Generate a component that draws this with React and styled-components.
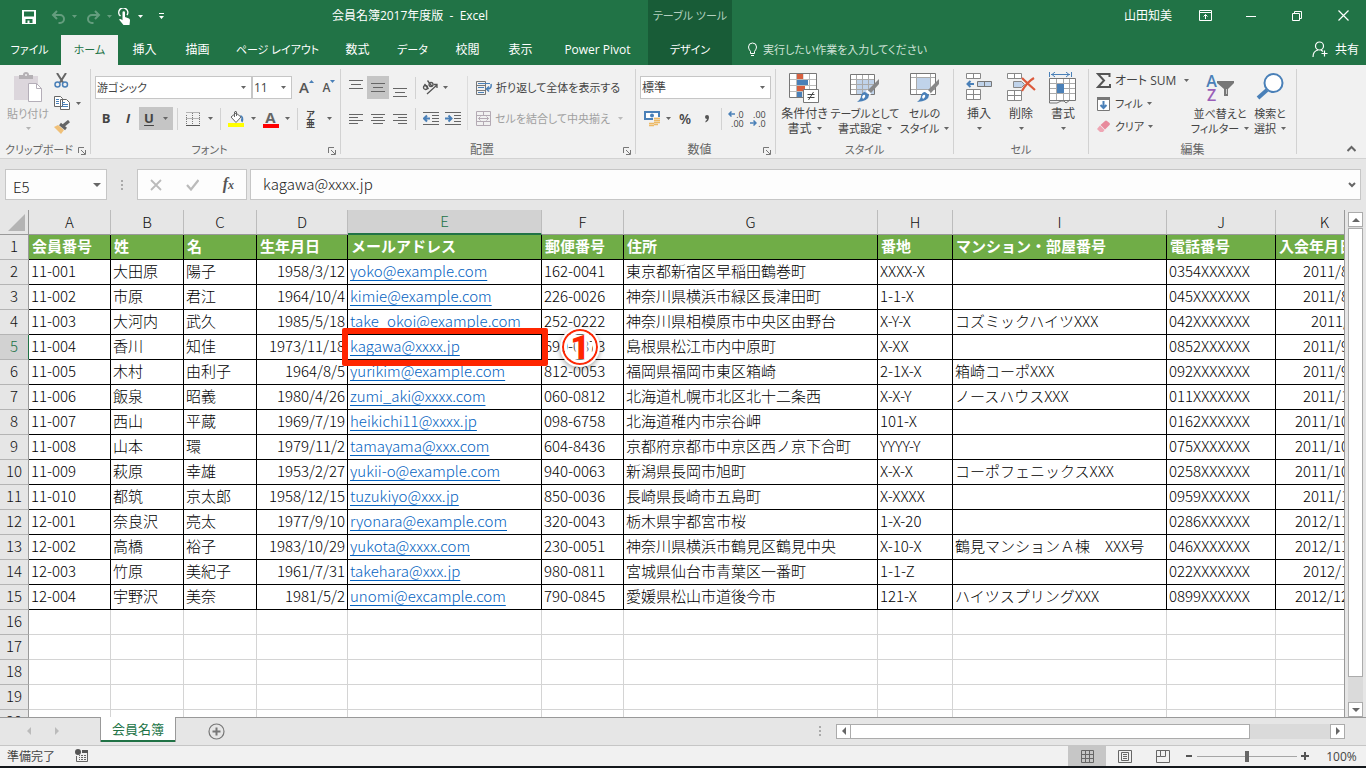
import React from 'react';
import styled, { createGlobalStyle, css } from 'styled-components';

const GlobalStyle = createGlobalStyle`
    * {
        box-sizing: border-box;
    }

    body {
        margin: 0;
        color: #444;
        font-family: 'Open Sans', 'Noto Sans CJK JP', sans-serif;
        font-size: 12px;
        line-height: 15px;
        font-feature-settings: 'palt';
    }

    button,
    input,
    select {
        margin: 0;
        padding: 0;
        border: 0;
        background: none;
        color: inherit;
        font: inherit;
        font-feature-settings: inherit;
        outline: none;
    }

    svg {
        display: block;
        flex: none;
    }
`;

const Window = styled.div`
    display: flex;
    flex-direction: column;
    height: 100vh;
    overflow: hidden;
    background: #e6e6e6;
    border-bottom: 2px solid #14181c;
`;

/* ---------- title bar and tabs ---------- */

const TitleBar = styled.header`
    display: flex;
    flex: none;
    height: 35px;
    background: #217346;
    color: #fff;
`;

const QuickAccess = styled.div`
    display: flex;
    align-items: center;
    flex: 0 0 172px;
    padding-left: 19px;
    padding-bottom: 2px;
`;

const QuickButton = styled.button`
    display: flex;
    align-items: center;
    justify-content: space-between;
    width: ${props => props.$w}px;
    margin-right: ${props => props.$gap || 0}px;
    padding: 0 3px;
    opacity: ${props => (props.disabled ? 0.3 : 1)};
`;

const Title = styled.div`
    flex: 0 0 476px;
    padding-top: 8px;
    text-align: center;
`;

const ToolTitle = styled.div`
    flex: 0 0 84px;
    padding-top: 8px;
    background: #185c37;
    color: #b3d0bf;
    font-size: 11px;
    text-align: center;
    white-space: nowrap;
`;

const UserName = styled.div`
    margin-left: auto;
    padding: 8px 10px 0 0;
`;

const WindowButton = styled.button`
    display: flex;
    align-items: center;
    justify-content: center;
    width: 46px;
    height: 31px;
`;

const TabBar = styled.nav`
    display: flex;
    flex: none;
    height: 30px;
    background: #217346;
    color: #fff;
`;

const TabButton = styled.button`
    width: ${props => props.$w}px;
    padding-bottom: 1px;
    font-size: ${props => (props.$kana ? 11 : 12)}px;
    white-space: nowrap;
    ${props =>
        props.$active &&
        css`
            background: #f1f1f1;
            color: #217346;
        `}
    ${props =>
        props.$tool &&
        css`
            background: #185c37;
        `}
`;

const TellMe = styled.label`
    display: flex;
    align-items: center;
    flex: 1;
    gap: 5px;
    padding: 0 0 1px 15px;
    font-size: 11px;

    input {
        flex: 1;
    }
    input::placeholder {
        color: #cfe2d7;
        opacity: 1;
    }
`;

const ShareButton = styled.button`
    display: flex;
    align-items: center;
    gap: 7px;
    padding: 0 7px 1px 0;
`;

/* ---------- ribbon ---------- */

const Ribbon = styled.div`
    display: flex;
    flex: none;
    height: 94px;
    padding: 4px 0;
    background: #f1f1f1;
    border-bottom: 1px solid #d2d2d2;
`;

const GroupBox = styled.section`
    display: flex;
    flex-direction: column;
    flex: none;
    width: ${props => props.$w}px;
    border-right: 1px solid #d2d2d2;
`;

const GroupBody = styled.div`
    display: flex;
    flex: 1;
    padding-left: ${props => props.$pad || 0}px;
`;

const GroupFooter = styled.div`
    display: flex;
    align-items: center;
    height: 10px;
    color: #666;
    font-size: ${props => (props.$kana ? 11 : 12)}px;
    text-align: center;
    white-space: nowrap;

    span {
        flex: 1;
    }
    button {
        width: 12px;
        padding-top: 3px;
    }
`;

const Rows = styled.div`
    display: flex;
    flex-direction: column;
    gap: 8px;
    padding-top: 7px;
`;

const Row = styled.div`
    display: flex;
    align-items: center;
    height: 23px;
`;

const ToolButton = styled.button`
    display: flex;
    align-items: center;
    justify-content: ${props => (props.$left ? 'flex-start' : 'center')};
    gap: ${props => props.$gap || 6}px;
    width: ${props => props.$w || 22}px;
    height: 23px;
    background: ${props => (props.$active ? '#c5c5c5' : 'transparent')};
    font-size: ${props => (props.$kana ? 11 : 12)}px;
    white-space: nowrap;

    &:disabled {
        color: #a0a0a0;
    }
`;

const Letter = styled.span`
    font-size: 13px;
    font-weight: 700;
    font-style: ${props => (props.$italic ? 'italic' : 'normal')};
    text-decoration: ${props => (props.$underline ? 'underline' : 'none')};
    text-underline-offset: 2px;
`;

const Percent = styled.span`
    font-size: 14px;
    font-weight: 600;
`;

const Divider = styled.span`
    width: 1px;
    height: 22px;
    margin: 0 ${props => props.$m || 4}px;
    background: #d2d2d2;
`;

const TallDivider = styled.span`
    width: 1px;
    height: 54px;
    margin: 7px 8px 0 3px;
    background: #dcdcdc;
`;

const SelectBox = styled.div`
    display: flex;
    align-items: center;
    width: ${props => props.$w}px;
    height: 23px;
    padding-right: 5px;
    background: #fff;
    border: 1px solid #c6c6c6;
    margin-right: ${props => props.$gap || 0}px;

    select {
        flex: 1;
        min-width: 0;
        padding-left: 1px;
        font-size: ${props => (props.$kana ? 11 : 12)}px;
        appearance: none;
    }
`;

const BigButton = styled.button`
    display: flex;
    flex-direction: column;
    align-items: center;
    width: ${props => props.$w}px;
    padding: 3px 0 0 ${props => props.$pad || 0}px;
    white-space: nowrap;

    &:disabled {
        color: #a0a0a0;
    }
    > :first-child {
        margin-bottom: 2px;
    }
`;

const BigLine = styled.span`
    display: flex;
    align-items: center;
    justify-content: center;
    gap: 5px;
    height: 15px;
    font-size: ${props => (props.$kana ? 11 : 12)}px;
`;

const SmallStack = styled.div`
    display: flex;
    flex-direction: column;
    width: ${props => props.$w}px;
    padding-left: ${props => props.$pad || 0}px;
`;

const CollapseButton = styled.button`
    align-self: flex-end;
    margin-left: auto;
    padding: 0 10px 0 0;
`;

/* ---------- formula bar ---------- */

const FormulaBar = styled.div`
    display: flex;
    align-items: center;
    flex: none;
    height: 51px;
    padding: 0 5px;
`;

const WhiteBox = styled.div`
    display: flex;
    align-items: center;
    height: 31px;
    background: #fdfdfd;
    border: 1px solid #c6c6c6;
`;

const NameBox = styled(WhiteBox)`
    width: 102px;
    padding-right: 5px;

    input {
        flex: 1;
        min-width: 0;
        padding: 3px 0 0 7px;
        font-family: 'Noto Sans CJK JP', sans-serif;
        font-size: 15px;
        font-weight: 300;
        line-height: 21px;
        color: #222;
    }
`;

const FormulaButtons = styled(WhiteBox)`
    justify-content: space-around;
    width: 110px;
    margin-right: 3px;
`;

const FormulaInput = styled(WhiteBox)`
    flex: 1;
    padding-right: 4px;

    input {
        flex: 1;
        padding: 0 0 2px 12px;
        font-family: 'Noto Sans CJK JP', sans-serif;
        font-size: 15px;
        font-weight: 300;
        line-height: 21px;
        color: #222;
    }
`;

const Grip = styled.span`
    width: 2px;
    height: 10px;
    margin: 0 14px;
    background: repeating-linear-gradient(#aaa 0 2px, transparent 2px 4px);
`;

/* ---------- grid ---------- */

const GridArea = styled.main`
    display: flex;
    flex: 1;
    min-height: 0;
`;

const GridView = styled.div`
    flex: 1;
    min-width: 0;
    overflow: hidden;
    border-right: 1px solid #999;
    font-family: 'Noto Sans CJK JP', sans-serif;
    font-size: 15px;
    font-weight: 300;
    font-feature-settings: normal;
    color: #000;
`;

const Sheet = styled.table`
    width: 1374px;
    table-layout: fixed;
    border-collapse: separate;
    border-spacing: 0;
    line-height: 22px;
    white-space: nowrap;

    th,
    td {
        height: 25px;
        padding: 0 2px 2px;
    }
`;

const ColumnHead = styled.th`
    background: ${props => (props.$active ? '#d2d2d2' : '#e6e6e6')};
    border-right: 1px solid #bcbcbc;
    border-bottom: ${props => (props.$active ? '2px solid #217346' : '1px solid #999')};
    color: ${props => (props.$active ? '#217346' : '#111')};
    font-weight: 300;
    line-height: 21px;
`;

const Corner = styled(ColumnHead)`
    border-right-color: #999;

    svg {
        margin: 3px 1px 0 auto;
    }
`;

const RowHead = styled.th`
    background: ${props => (props.$active ? '#d2d2d2' : '#e6e6e6')};
    border-right: 1px solid ${props => (props.$active ? '#217346' : '#999')};
    border-bottom: 1px solid #b4b4b4;
    color: ${props => (props.$active ? '#217346' : '#111')};
    font-weight: 300;
`;

const Cell = styled.td`
    position: relative;
    background: #fff;
    border-right: 1px solid ${props => (props.$data ? '#000' : '#d4d4d4')};
    border-bottom: 1px solid ${props => (props.$data ? '#000' : '#d4d4d4')};
    text-align: ${props => (props.$right ? 'right' : 'left')};
`;

const FieldCell = styled(Cell)`
    && {
        padding-left: 3px;
    }
    background: #70ad47;
    color: #fff;
    font-weight: 700;
`;

const Mail = styled.a`
    color: #0563c1;
    text-decoration: underline;
    text-decoration-thickness: 1px;
    text-underline-offset: 3px;
    text-decoration-skip-ink: none;
`;

const Frame = styled.span`
    position: absolute;
    z-index: 2;
    inset: -7px -7px -7px -6px;
    border: 6px solid #ff2600;
    border-radius: 2px;
`;

const Marker = styled.span`
    position: absolute;
    z-index: 3;
    top: -6px;
    left: 214px;
    width: 36px;
    height: 36px;
    border: 2px solid #ff2600;
    border-radius: 50%;
    outline: 2px solid #fff;
    box-shadow: 0 2px 5px 2px rgba(0, 0, 0, 0.35), inset 0 0 0 3px #fff;
    color: #ff2600;
    font-family: Roboto, sans-serif;
    font-size: 34px;
    font-weight: 900;
    line-height: 32px;
    text-align: center;
    text-shadow: 2px 0 #fff, -2px 0 #fff, 3px 0 2px #fff, -3px 0 2px #fff, 0 0 6px #fff;
`;

const VScroll = styled.div`
    display: flex;
    flex-direction: column;
    width: 15px;
    margin: 2px 3px 0;
    background: #dadada;
`;

const ScrollButton = styled.button`
    display: flex;
    align-items: center;
    justify-content: center;
    flex: 0 0 15px;
    height: 15px;
    background: #fff;
    border: 1px solid #ababab;
`;

const VThumb = styled.div`
    flex: 0 0 89%;
    margin: 1px 0 auto;
    background: #fff;
    border: 1px solid #ababab;
`;

/* ---------- sheet tabs and status bar ---------- */

const SheetBar = styled.div`
    display: flex;
    flex: none;
    height: 28px;
    box-shadow: inset 0 1px #999;
`;

const SheetArrows = styled.div`
    display: flex;
    align-items: center;
    justify-content: space-around;
    width: 100px;
    padding: 0 29px 0 15px;
`;

const SheetTab = styled.button`
    width: 76px;
    height: 25px;
    background: #fff;
    border: solid #999;
    border-width: 0 1px;
    box-shadow: inset 0 -2px #217346;
    color: #217346;
    font-size: 13px;
`;

const AddSheet = styled.button`
    padding: 0 32px;
`;

const HScroll = styled.div`
    display: flex;
    flex: 0 0 509px;
    align-self: center;
    height: 15px;
    margin-right: 21px;
    background: #dadada;
`;

const HThumb = styled.div`
    flex: 0 1 400px;
    margin-right: auto;
    margin-left: -1px;
    background: #fff;
    border: 1px solid #ababab;
`;

const BarGrip = styled(Grip)`
    align-self: center;
    margin: 0 15px 0 auto;
`;

const StatusBar = styled.footer`
    display: flex;
    align-items: center;
    flex: none;
    height: 21px;
    background: #f1f1f1;
    border-top: 1px solid #c6c6c6;
`;

const StatusText = styled.span`
    padding: 0 20px 0 7px;
`;

const ViewButton = styled.button`
    display: flex;
    align-items: center;
    justify-content: center;
    width: 38px;
    height: 20px;
    background: ${props => (props.$active ? '#c6c6c6' : 'transparent')};
`;

const Views = styled.div`
    display: flex;
    margin: 0 3px 0 auto;
`;

const ZoomRange = styled.input`
    width: 100px;
    height: 11px;
    margin: 0 4px;
    appearance: none;
    background: linear-gradient(#a6a6a6, #a6a6a6) center / 100% 1px no-repeat;

    &::-webkit-slider-thumb {
        width: 4px;
        height: 11px;
        appearance: none;
        background: #666;
    }
`;

const ZoomValue = styled.button`
    width: 57px;
    padding-left: 8px;
`;

/* ---------- icons ---------- */

const Svg = ({ w = 16, h = 16, children, ...rest }) => (
    <svg width={w} height={h} viewBox={`0 0 ${w} ${h}`} fill="none" aria-hidden="true" {...rest}>
        {children}
    </svg>
);

const Arrow = ({ color = '#666' }) => (
    <Svg w={5} h={3}>
        <path d="M0 0h5L2.500 3z" fill={color} />
    </Svg>
);

const SaveIcon = () => (
    <Svg w={14} h={14}>
        <path fillRule="evenodd" d="M0 0h14v14H0zM2 1.500v5h10v-5zM3.500 9v4h2v-2.500h2V13h3V9z" fill="#fff" />
    </Svg>
);

const UndoIcon = () => (
    <Svg w={15} h={14}>
        <path d="M6 1L2 5l4 4M2.500 5H9a4 4 0 0 1 0 8H7.500" stroke="#fff" strokeWidth="2" />
    </Svg>
);

const RedoIcon = () => (
    <Svg w={15} h={14}>
        <path d="M9 1l4 4-4 4M12.500 5H6a4 4 0 0 0 0 8h1.500" stroke="#fff" strokeWidth="2" />
    </Svg>
);

const TouchIcon = () => (
    <Svg w={13} h={17}>
        <path d="M2.500 8A4.500 4.500 0 1 1 9 7" stroke="#fff" strokeWidth="1.500" />
        <path d="M4.500 4.500a1.200 1.200 0 0 1 2.500 0V9l4 1.500q1 .5 1 2L11.500 17H5.500L1 11.500q1-1 2-.3l1.500 1z" fill="#fff" />
    </Svg>
);

const CustomizeIcon = () => (
    <Svg w={7} h={7}>
        <path d="M1 0h5v1H1zM1 3h5L3.500 6z" fill="#fff" />
    </Svg>
);

const RibbonOptionsIcon = () => (
    <Svg w={13} h={11} stroke="#fff">
        <path d="M.5.5h12v10H.5zM.5 2.500h12M6.500 9V4.500M4.500 6.500l2-2 2 2" />
    </Svg>
);

const MinimizeIcon = () => (
    <Svg w={10} h={10}>
        <path d="M0 5.500h10" stroke="#fff" />
    </Svg>
);

const RestoreIcon = () => (
    <Svg w={10} h={10} stroke="#fff">
        <path d="M.5 2.500h7v7h-7zM2.500 2.500v-2h7v7h-2" />
    </Svg>
);

const CloseIcon = () => (
    <Svg w={11} h={11}>
        <path d="M.5.5l10 10M10.500.5l-10 10" stroke="#fff" strokeWidth="1.200" />
    </Svg>
);

const BulbIcon = () => (
    <Svg w={11} h={15} stroke="#fff">
        <path d="M3.500 9.500Q1.500 7 1.500 5a4 4 0 0 1 8 0q0 2-2 4.500v2h-4zM4 13.500h3" />
    </Svg>
);

const PersonIcon = () => (
    <Svg w={16} h={17} stroke="#fff" strokeWidth="1.200">
        <circle cx="7.500" cy="5" r="4" />
        <path d="M1 16q0-6 5-7M9 9l2 1.500M12.500 9.500v6M9.500 12.500h6" />
    </Svg>
);

const PasteIcon = () => (
    <Svg w={30} h={32}>
        <path d="M1 4h24v24H1z" fill="#dcd6dc" />
        <path d="M6 7V3h4q0-3 3-3t3 3h4v4z" fill="#b4b0b4" />
        <circle cx="13" cy="3" r="1" fill="#f1f1f1" />
        <path d="M15.500 11.500h8l5 5v13h-13z" fill="#fff" stroke="#b4aeb8" />
        <path d="M23.500 11.500v5h5" stroke="#b4aeb8" />
    </Svg>
);

const CutIcon = () => (
    <Svg w={15} h={15}>
        <path d="M3 0l6 9.500M12 0L6 9.500" stroke="#666" strokeWidth="2" />
        <circle cx="3.500" cy="11.500" r="2.500" stroke="#4a80b8" strokeWidth="1.500" />
        <circle cx="11" cy="11.500" r="2.500" stroke="#4a80b8" strokeWidth="1.500" />
    </Svg>
);

const CopyIcon = () => (
    <Svg w={16} h={15}>
        <path d="M.5.5h6l2 2v8h-8zM6.500 3.500h6l3 3v7h-9z" fill="#fff" stroke="#666" />
        <path d="M2 3.500h3M2 5.500h3M2 7.500h3M8 6.500h3M8 8.500h6M8 10.500h6" stroke="#4a80b8" />
    </Svg>
);

const BrushIcon = () => (
    <Svg w={16} h={14}>
        <path d="M0 7l4-2 6 5-3 4z" fill="#f0c078" />
        <path d="M6 4l6 5" stroke="#666" strokeWidth="3" />
        <path d="M9 6l6-5" stroke="#666" strokeWidth="3" />
    </Svg>
);

const GrowBox = styled.span`
    display: flex;
    align-items: flex-start;
    color: #555;
    font-size: ${props => (props.$small ? 12 : 15)}px;
    font-weight: 600;
`;

const GrowIcon = ({ small }) => (
    <GrowBox $small={small}>
        A
        <Svg w={5} h={4}>
            <path d={small ? 'M0 0h5L2.500 3z' : 'M0 3h5L2.500 0z'} fill="#4a80b8" />
        </Svg>
    </GrowBox>
);

const BordersIcon = () => (
    <Svg w={14} h={14} stroke="#777">
        <path d="M.5.5h13M.5 6.500h13M.5 3v10M6.500 1v12M13.500 1v12" strokeDasharray="1 1" />
        <path d="M0 13.500h14" stroke="#555" />
    </Svg>
);

const FillIcon = () => (
    <Svg w={17} h={16}>
        <path d="M3 6l5-4 5 4-5 5.500z" fill="#fff" stroke="#666" />
        <path d="M6.500 6V1q2-1.500 2 0v4" stroke="#666" />
        <path d="M12 4q5 1 2.500 7.500Q12 10 13.500 7z" fill="#4a80b8" />
        <path d="M0 12h16v4H0z" fill="#ff0" />
    </Svg>
);

const FontColorBox = styled.span`
    width: 16px;
    height: 18px;
    border-bottom: 4px solid #f00;
    color: #666;
    font-size: 15px;
    font-weight: 700;
    line-height: 14px;
    text-align: center;
`;

const Ruby = styled.span`
    display: flex;
    flex-direction: column;
    font-size: 9px;
    font-weight: 700;
    line-height: 9px;
`;

const linePaths = {
    top: 'M0 1.500h14M2 5.500h10M0 9.500h14',
    left: 'M0 1.500h14M0 4.500h9M0 7.500h14M0 10.500h9',
    center: 'M0 1.500h14M2 4.500h10M0 7.500h14M2 10.500h10',
    right: 'M0 1.500h14M5 4.500h9M0 7.500h14M5 10.500h9',
};

const LinesIcon = ({ type, dy = 0 }) => (
    <Svg w={14} h={22} stroke="#666">
        <g transform={`translate(0 ${5 + dy})`}>
            <path d={linePaths[type]} />
        </g>
    </Svg>
);

const OrientationIcon = () => (
    <Svg w={17} h={16} stroke="#555" strokeWidth="1.300">
        <circle cx="3.500" cy="7.500" r="2" />
        <path d="M2.500 4l4 5M5.500.5l4.500 6" />
        <circle cx="9" cy="4.500" r="2" />
        <path d="M5 14l10-9M11.500 4.500H15V8" />
    </Svg>
);

const IndentIcon = ({ right }) => (
    <Svg w={16} h={14}>
        <path d="M0 .5h16M9 3.500h7M9 6.500h7M9 9.500h7M0 12.500h16" stroke="#666" />
        <path d={right ? 'M0 6.500h6M3.500 3.500l3 3-3 3' : 'M7 6.500H1M4 3.500l-3 3 3 3'} stroke="#4a80b8" strokeWidth="2" />
    </Svg>
);

const WrapIcon = () => (
    <Svg w={16} h={16}>
        <path d="M.5 1.500h9v13h-9zM.5 5.500h9M.5 10.500h9" stroke="#777" />
        <path d="M2 3.500h12M2 7.500h6M2 12.500h6" stroke="#4a80b8" />
        <path d="M15 4q1 5-4 5M13 6.500L10.500 9l2.500 2.500" stroke="#4a80b8" strokeWidth="1.500" />
    </Svg>
);

const MergeIcon = () => (
    <Svg w={15} h={15} stroke="#b4aab4">
        <path d="M.5.5h14v14H.5zM.5 4.500h14M.5 10.500h14M7.500 0v4M7.500 11v4M2.500 7.500h10M4.500 5.500l-2 2 2 2M10.500 5.500l2 2-2 2" />
    </Svg>
);

const MoneyIcon = () => (
    <Svg w={17} h={16}>
        <path d="M1 1h14v7H1z" stroke="#4a80b8" strokeWidth="2" fill="#fff" />
        <circle cx="8" cy="4.500" r="2" fill="#4a80b8" />
        <path d="M9 6h7v9h-5v1H5v-5h4z" fill="#f1f1f1" />
        <path d="M10 7.500h6M10 9.500h6M10 11.500h6M5 12.500h5M5 14.500h5M10 13.500h4" stroke="#edb964" strokeWidth="1.500" />
    </Svg>
);

const CommaIcon = () => (
    <Svg w={6} h={10}>
        <path d="M1 3a2 2 0 1 1 4 0q0 4-3.500 5.500v-1.500q1.500-1 1.500-2Q1 5 1 3z" fill="#555" />
    </Svg>
);

const DecimalBox = styled.span`
    display: flex;
    flex-direction: column;
    color: #444;
    font-size: 9px;
    line-height: 9px;

    span {
        display: flex;
        align-items: center;
        justify-content: flex-end;
        gap: 1px;
    }
`;

const DecimalArrow = ({ right }) => (
    <Svg w={7} h={6}>
        <path d={right ? 'M0 3h6M3.500.5L6 3 3.500 5.500' : 'M7 3H1M3.500.5L1 3l2.500 2.500'} stroke="#4a80b8" strokeWidth="1.500" />
    </Svg>
);

const ConditionalIcon = () => (
    <Svg w={31} h={32}>
        <path d="M.5 1.500h27v24H.5z" fill="#fff" />
        <path d="M7.500 1v25M14 1v25M20.500 1v25M1 7.500h27M1 13.500h27M1 19.500h27" stroke="#bbb" />
        <path d="M8 2h6v5H8zM8 14h8v5H8z" fill="#d8603f" />
        <path d="M8 8h11v5H8zM8 20h5v6H8z" fill="#4a80b8" />
        <path d="M.5 1.500h27v24H.5z" stroke="#777" />
        <path d="M14.500 17.500h15v13h-15z" fill="#fff" stroke="#777" />
        <path d="M18.500 22.500h7M18.500 25.500h7M24.500 20l-5 8" stroke="#444" />
    </Svg>
);

const TableBrush = () => (
    <g>
        <path d="M29 7v5l-8 9-3-3z" fill="#888" />
        <path d="M16.500 18.500l4 4" stroke="#fff" strokeWidth="2" />
        <path d="M15 20l4 3q0 6-12 7 4-3 4-6 1-4 4-4z" fill="#4a80b8" />
        <path d="M12 25q1-3 3-2 1 2-2 4z" fill="#fff" />
    </g>
);

const FormatTableIcon = () => (
    <Svg w={30} h={32}>
        <path d="M.5 2.500h24v20H.5z" fill="#fff" />
        <path d="M7 8h17v15H7z" fill="#c0d3ea" />
        <path d="M6.500 3v20M12.500 3v20M18.500 3v20M1 7.500h24M1 12.500h24M1 17.500h24" stroke="#aaa" />
        <path d="M.5 2.500h24v20H.5z" stroke="#777" />
        <TableBrush />
    </Svg>
);

const CellStyleIcon = () => (
    <Svg w={30} h={32}>
        <path d="M.5 1.500h25v21H.5z" fill="#fff" />
        <path d="M6.500 2v21M20.500 2v21M1 5.500h25M1 17.500h25" stroke="#aaa" />
        <path d="M7 6h13v11H7z" fill="#c0d3ea" />
        <path d="M.5 1.500h25v21H.5z" stroke="#777" />
        <TableBrush />
    </Svg>
);

const InsertIcon = () => (
    <Svg w={26} h={32}>
        <path d="M.5 1.500h14v5H.5zM7.500 1.500v5M.5 17.500h14v10H.5zM.5 22.500h14M7.500 17.500v10" fill="#fff" stroke="#888" />
        <path d="M11.500 9.500h14v5h-14zM18.500 9.500v5" fill="#c0d3ea" stroke="#777" />
        <path d="M8 12H2M4.500 9L1.500 12l3 3" stroke="#4a80b8" strokeWidth="2" />
    </Svg>
);

const DeleteIcon = () => (
    <Svg w={29} h={32}>
        <path d="M.5 1.500h14v5H.5zM7.500 1.500v5M.5 18.500h14v10H.5zM.5 23.500h14M7.500 18.500v10" fill="#fff" stroke="#888" />
        <path d="M6.500 9.500h8l3 3-3 3h-8z" fill="#c0d3ea" stroke="#888" />
        <path d="M15 6q5 5 13 12M27 6q-7 4-12 13" stroke="#dc5a3c" strokeWidth="2.200" />
    </Svg>
);

const FormatIcon = () => (
    <Svg w={28} h={32}>
        <path d="M.5 0v5M22.500 0v5M2 2.500h19M6 0L3 2.500 6 5M17 0l3 2.500L17 5" stroke="#4a80b8" />
        <path d="M.5 6.500h26v22H.5z" fill="#fff" />
        <path d="M7.500 7v21M14.500 7v21M20.500 7v21M1 11.500h26M1 16.500h26M1 21.500h26" stroke="#aaa" />
        <path d="M8 12h7v9H8z" fill="#4a80b8" />
        <path d="M.5 6.500h26v22H.5zM.5 28.500V31H8l4-2h3l2 2 4-3" stroke="#777" />
    </Svg>
);

const SumIcon = () => (
    <Svg w={15} h={15}>
        <path d="M13.500 4V1H2l6 6.500L2 14h12v-3" stroke="#555" strokeWidth="2" />
    </Svg>
);

const FillDownIcon = () => (
    <Svg w={15} h={16}>
        <path d="M1.500 1.500h12v13h-12z" fill="#fff" stroke="#777" />
        <path d="M1 1h13v3H1z" fill="#777" />
        <path d="M7.500 5v7M4.500 9l3 3 3-3" stroke="#4a80b8" strokeWidth="2" />
    </Svg>
);

const EraserIcon = () => (
    <Svg w={15} h={13}>
        <path d="M9 1q1-1 2 0l2.500 2q1 1 0 2L9 9.500 4.500 5z" fill="#e88a9c" />
        <path d="M4 5.500L8.500 10 7 12H4L1 9z" fill="#efa6b4" />
    </Svg>
);

const SortBox = styled.span`
    display: flex;
    align-items: center;
    height: 32px;
`;

const SortLetters = styled.span`
    color: ${props => props.$color};
    font-size: 16px;
    font-weight: 600;
    line-height: 14px;
`;

const LetterStack = styled.span`
    display: flex;
    flex-direction: column;
    align-items: center;
`;

const FunnelIcon = () => (
    <Svg w={17} h={16}>
        <path d="M0 1h17v2l-6 6v7H7V9L0 3z" fill="#777" />
        <path d="M9.500 9v5" stroke="#ccc" />
    </Svg>
);

const SearchIcon = () => (
    <Svg w={28} h={32}>
        <circle cx="17.500" cy="11" r="9" fill="#fff" stroke="#4a80b8" strokeWidth="2" />
        <path d="M11 18l-9 8" stroke="#4a80b8" strokeWidth="4" />
    </Svg>
);

const LauncherIcon = () => (
    <Svg w={8} h={8}>
        <path d="M.5 6V.5H6M3 3l4 4M7.500 3v4.500H3" stroke="#777" />
    </Svg>
);

const ChevronUp = () => (
    <Svg w={9} h={9}>
        <path d="M.5 6l4-4 4 4" stroke="#666" strokeWidth="2" />
    </Svg>
);

const ChevronDown = () => (
    <Svg w={8} h={6}>
        <path d="M1 1l3 3 3-3" stroke="#666" strokeWidth="2" />
    </Svg>
);

const Triangle = ({ dir, color = '#666' }) => {
    const paths = {
        up: 'M0 6h8L4 2z',
        down: 'M0 2h8L4 6z',
        left: 'M6 0v8L2 4z',
        right: 'M2 0v8l4-4z',
    };
    return (
        <Svg w={8} h={8}>
            <path d={paths[dir]} fill={color} />
        </Svg>
    );
};

const CrossIcon = () => (
    <Svg w={12} h={12}>
        <path d="M1 1l10 10M11 1L1 11" stroke="#bbb" strokeWidth="1.800" />
    </Svg>
);

const CheckIcon = () => (
    <Svg w={13} h={12}>
        <path d="M1 6l4 4.500L12.500 1" stroke="#bbb" strokeWidth="2.200" />
    </Svg>
);

const FxLabel = styled.span`
    font-family: 'Liberation Serif', serif;
    font-size: 16px;
    font-style: italic;
    font-weight: 700;
    color: #555;

    small {
        font-size: 12px;
    }
`;

const AddIcon = () => (
    <Svg w={17} h={17} stroke="#777">
        <circle cx="8.500" cy="8.500" r="7.500" strokeWidth="1.200" />
        <path d="M4.500 8.500h8M8.500 4.500v8" strokeWidth="2" />
    </Svg>
);

const MacroIcon = () => (
    <Svg w={14} h={14}>
        <circle cx="3" cy="3" r="3" fill="#555" />
        <path d="M7 1h6v3H7z" fill="#555" />
        <path d="M1.500 7v5.500h11V4M4 6.500h1M6 6.500h2M9 6.500h2M4 8.500h1M6 8.500h2M9 8.500h2M4 10.500h1M6 10.500h2M9 10.500h2" stroke="#666" />
    </Svg>
);

const NormalViewIcon = () => (
    <Svg w={13} h={13} stroke="#666">
        <path d="M.5.5h12v12H.5zM4.500 0v13M8.500 0v13M0 4.500h13M0 8.500h13" />
    </Svg>
);

const PageViewIcon = () => (
    <Svg w={14} h={13} stroke="#666">
        <path d="M.5.5h13v12H.5zM3.500 2.500h7v8h-7zM5 4.500h4M5 6.500h4M5 8.500h4" />
    </Svg>
);

const BreakViewIcon = () => (
    <Svg w={14} h={13} stroke="#666">
        <path d="M.5.5h13v12H.5zM4.500 0v6.500M4.500 6.500h5V0M.5 6.500h4" />
    </Svg>
);

const StepIcon = ({ plus }) => (
    <Svg w={8} h={8}>
        <path d={plus ? 'M0 4h8M4 0v8' : 'M1 4h6'} stroke="#555" strokeWidth="2" />
    </Svg>
);

/* ---------- data ---------- */

const TABS = [
    { name: 'ファイル', width: 59, kana: true },
    { name: 'ホーム', width: 57, active: true, kana: true },
    { name: '挿入', width: 53 },
    { name: '描画', width: 53 },
    { name: 'ページ レイアウト', width: 107, kana: true },
    { name: '数式', width: 53 },
    { name: 'データ', width: 57, kana: true },
    { name: '校閲', width: 53 },
    { name: '表示', width: 53 },
    { name: 'Power Pivot', width: 101 },
    { name: 'デザイン', width: 84, tool: true, kana: true },
];

// the file tab keeps a thin gap before the active tab
const FileTab = styled(TabButton)`
    margin-right: 2px;
`;

const COLUMNS = [
    { id: 'A', width: 82, title: '会員番号' },
    { id: 'B', width: 73, title: '姓' },
    { id: 'C', width: 73, title: '名' },
    { id: 'D', width: 91, title: '生年月日', right: true },
    { id: 'E', width: 194, title: 'メールアドレス' },
    { id: 'F', width: 82, title: '郵便番号' },
    { id: 'G', width: 254, title: '住所' },
    { id: 'H', width: 75, title: '番地' },
    { id: 'I', width: 214, title: 'マンション・部屋番号' },
    { id: 'J', width: 109, title: '電話番号' },
    { id: 'K', width: 98, title: '入会年月日', right: true },
];

const MEMBERS = [
    ['11-001', '大田原', '陽子', '1958/3/12', 'yoko@example.com', '162-0041', '東京都新宿区早稲田鶴巻町', 'XXXX-X', '', '0354XXXXXX', '2011/8/10'],
    ['11-002', '市原', '君江', '1964/10/4', 'kimie@example.com', '226-0026', '神奈川県横浜市緑区長津田町', '1-1-X', '', '045XXXXXXX', '2011/8/21'],
    ['11-003', '大河内', '武久', '1985/5/18', 'take_okoi@example.com', '252-0222', '神奈川県相模原市中央区由野台', 'X-Y-X', 'コズミックハイツXXX', '042XXXXXXX', '2011/9/1'],
    ['11-004', '香川', '知佳', '1973/11/18', 'kagawa@xxxx.jp', '690-0873', '島根県松江市内中原町', 'X-XX', '', '0852XXXXXX', '2011/9/10'],
    ['11-005', '木村', '由利子', '1964/8/5', 'yurikim@example.com', '812-0053', '福岡県福岡市東区箱崎', '2-1X-X', '箱崎コーポXXX', '092XXXXXXX', '2011/9/21'],
    ['11-006', '飯泉', '昭義', '1980/4/26', 'zumi_aki@xxxx.com', '060-0812', '北海道札幌市北区北十二条西', 'X-X-Y', 'ノースハウスXXX', '011XXXXXXX', '2011/10/1'],
    ['11-007', '西山', '平蔵', '1969/7/19', 'heikichi11@xxxx.jp', '098-6758', '北海道稚内市宗谷岬', '101-X', '', '0162XXXXXX', '2011/10/10'],
    ['11-008', '山本', '環', '1979/11/2', 'tamayama@xxx.com', '604-8436', '京都府京都市中京区西ノ京下合町', 'YYYY-Y', '', '075XXXXXXX', '2011/10/15'],
    ['11-009', '萩原', '幸雄', '1953/2/27', 'yukii-o@example.com', '940-0063', '新潟県長岡市旭町', 'X-X-X', 'コーポフェニックスXXX', '0258XXXXXX', '2011/10/21'],
    ['11-010', '都筑', '京太郎', '1958/12/15', 'tuzukiyo@xxx.jp', '850-0036', '長崎県長崎市五島町', 'X-XXXX', '', '0959XXXXXX', '2011/11/1'],
    ['12-001', '奈良沢', '亮太', '1977/9/10', 'ryonara@example.com', '320-0043', '栃木県宇都宮市桜', '1-X-20', '', '0286XXXXXX', '2012/11/10'],
    ['12-002', '高橋', '裕子', '1983/10/29', 'yukota@xxxx.com', '230-0051', '神奈川県横浜市鶴見区鶴見中央', 'X-10-X', '鶴見マンションＡ棟　XXX号', '046XXXXXXX', '2012/11/21'],
    ['12-003', '竹原', '美紀子', '1961/7/31', 'takehara@xxx.jp', '980-0811', '宮城県仙台市青葉区一番町', '1-1-Z', '', '022XXXXXXX', '2012/12/1'],
    ['12-004', '宇野沢', '美奈', '1981/5/2', 'unomi@excample.com', '790-0845', '愛媛県松山市道後今市', '121-X', 'ハイツスプリングXXX', '0899XXXXXX', '2012/12/10'],
];

const EMPTY_ROWS = [16, 17, 18, 19, 20];

/* ---------- parts ---------- */

const Group = ({ label, width, pad, kana, launcher, children }) => (
    <GroupBox $w={width} aria-label={label}>
        <GroupBody $pad={pad}>{children}</GroupBody>
        <GroupFooter $kana={kana}>
            <span>{label}</span>
            {launcher && (
                <button aria-label={`${label}の設定`}>
                    <LauncherIcon />
                </button>
            )}
        </GroupFooter>
    </GroupBox>
);

const Dropdown = ({ label, value, width, gap, kana }) => (
    <SelectBox $w={width} $gap={gap} $kana={kana}>
        <select aria-label={label} defaultValue={value}>
            <option>{value}</option>
        </select>
        <Arrow />
    </SelectBox>
);

const Header = () => (
    <>
        <TitleBar>
            <QuickAccess>
                <QuickButton $w={29} aria-label="上書き保存">
                    <SaveIcon />
                </QuickButton>
                <QuickButton $w={32} $gap={3} disabled aria-label="元に戻す">
                    <UndoIcon />
                    <Arrow color="#fff" />
                </QuickButton>
                <QuickButton $w={32} disabled aria-label="やり直し">
                    <RedoIcon />
                    <Arrow color="#fff" />
                </QuickButton>
                <QuickButton $w={31} $gap={9} aria-label="タッチ/マウス モード">
                    <TouchIcon />
                    <Arrow color="#fff" />
                </QuickButton>
                <QuickButton $w={14} aria-label="クイック アクセス ツール バー">
                    <CustomizeIcon />
                </QuickButton>
            </QuickAccess>
            <Title>会員名簿2017年度版&nbsp; -&nbsp; Excel</Title>
            <ToolTitle>テーブル ツール</ToolTitle>
            <UserName>山田知美</UserName>
            <WindowButton aria-label="リボンの表示オプション">
                <RibbonOptionsIcon />
            </WindowButton>
            <WindowButton aria-label="最小化">
                <MinimizeIcon />
            </WindowButton>
            <WindowButton aria-label="元に戻す">
                <RestoreIcon />
            </WindowButton>
            <WindowButton aria-label="閉じる">
                <CloseIcon />
            </WindowButton>
        </TitleBar>
        <TabBar>
            {TABS.map((tab, index) => {
                const Tab = index === 0 ? FileTab : TabButton;
                return (
                    <Tab
                        key={tab.name}
                        $w={tab.width}
                        $active={tab.active}
                        $tool={tab.tool}
                        $kana={tab.kana}
                    >
                        {tab.name}
                    </Tab>
                );
            })}
            <TellMe>
                <BulbIcon />
                <input aria-label="操作アシスト" placeholder="実行したい作業を入力してください" />
            </TellMe>
            <ShareButton>
                <PersonIcon />
                共有
            </ShareButton>
        </TabBar>
    </>
);

const ClipboardGroup = () => (
    <Group label="クリップボード" width={91} kana launcher>
        <BigButton $w={53} $pad={3} disabled>
            <PasteIcon />
            <BigLine $kana>貼り付け</BigLine>
            <BigLine>
                <Arrow color="#b4b4b4" />
            </BigLine>
        </BigButton>
        <SmallStack $w={36} $pad={1}>
            <ToolButton $w={35} $left aria-label="切り取り">
                <CutIcon />
            </ToolButton>
            <ToolButton $w={35} $left aria-label="コピー">
                <CopyIcon />
                <Arrow />
            </ToolButton>
            <ToolButton $w={35} $left aria-label="書式のコピー">
                <BrushIcon />
            </ToolButton>
        </SmallStack>
    </Group>
);

const FontGroup = () => (
    <Group label="フォント" width={250} pad={4} kana launcher>
        <Rows>
            <Row>
                <Dropdown label="フォント" value="游ゴシック" width={157} kana />
                <Dropdown label="フォント サイズ" value="11" width={40} gap={3} />
                <ToolButton $w={23} aria-label="フォント サイズの拡大">
                    <GrowIcon />
                </ToolButton>
                <ToolButton aria-label="フォント サイズの縮小">
                    <GrowIcon small />
                </ToolButton>
            </Row>
            <Row>
                <ToolButton>
                    <Letter>B</Letter>
                </ToolButton>
                <ToolButton>
                    <Letter $italic>I</Letter>
                </ToolButton>
                <ToolButton $w={34} $gap={9} $active>
                    <Letter $underline>U</Letter>
                    <Arrow />
                </ToolButton>
                <Divider />
                <ToolButton $w={34} $gap={8} aria-label="罫線">
                    <BordersIcon />
                    <Arrow />
                </ToolButton>
                <Divider />
                <ToolButton $w={34} aria-label="塗りつぶしの色">
                    <FillIcon />
                    <Arrow />
                </ToolButton>
                <ToolButton $w={34} aria-label="フォントの色">
                    <FontColorBox>A</FontColorBox>
                    <Arrow />
                </ToolButton>
                <Divider />
                <ToolButton $w={34} $gap={12} aria-label="ふりがな">
                    <Ruby>
                        <span>ア</span>
                        <span>亜</span>
                    </Ruby>
                    <Arrow />
                </ToolButton>
            </Row>
        </Rows>
    </Group>
);

const AlignGroup = () => (
    <Group label="配置" width={295} pad={4} launcher>
        <Rows>
            <Row>
                <ToolButton aria-label="上揃え">
                    <LinesIcon type="top" dy={-3} />
                </ToolButton>
                <ToolButton $active aria-label="上下中央揃え">
                    <LinesIcon type="top" />
                </ToolButton>
                <ToolButton aria-label="下揃え">
                    <LinesIcon type="top" dy={5} />
                </ToolButton>
                <Divider />
                <ToolButton $w={30} $gap={4} aria-label="方向">
                    <OrientationIcon />
                    <Arrow />
                </ToolButton>
            </Row>
            <Row>
                <ToolButton aria-label="左揃え">
                    <LinesIcon type="left" />
                </ToolButton>
                <ToolButton aria-label="中央揃え">
                    <LinesIcon type="center" />
                </ToolButton>
                <ToolButton aria-label="右揃え">
                    <LinesIcon type="right" />
                </ToolButton>
                <Divider />
                <ToolButton aria-label="インデントを減らす">
                    <IndentIcon />
                </ToolButton>
                <ToolButton aria-label="インデントを増やす">
                    <IndentIcon right />
                </ToolButton>
            </Row>
        </Rows>
        <TallDivider />
        <Rows>
            <ToolButton $w={154} $left $gap={4} $kana>
                <WrapIcon />
                折り返して全体を表示する
            </ToolButton>
            <ToolButton $w={154} $left $gap={4} $kana disabled>
                <MergeIcon />
                <span>セルを結合して中央揃え</span>
                <Svg w={9} h={3}>
                    <path d="M4 0h5L6.500 3z" fill="#bbb" />
                </Svg>
            </ToolButton>
        </Rows>
    </Group>
);

const NumberGroup = () => (
    <Group label="数値" width={140} pad={4} launcher>
        <Rows>
            <Row>
                <Dropdown label="数値の書式" value="標準" width={131} />
            </Row>
            <Row>
                <ToolButton $w={34} $gap={5} aria-label="通貨表示形式">
                    <MoneyIcon />
                    <Arrow />
                </ToolButton>
                <ToolButton>
                    <Percent>%</Percent>
                </ToolButton>
                <ToolButton aria-label="桁区切りスタイル">
                    <CommaIcon />
                </ToolButton>
                <Divider $m={3} />
                <ToolButton>
                    <DecimalBox>
                        <span>
                            <DecimalArrow />
                            .0
                        </span>
                        <span>.00</span>
                    </DecimalBox>
                </ToolButton>
                <ToolButton>
                    <DecimalBox>
                        <span>.00</span>
                        <span>
                            <DecimalArrow right />
                            .0
                        </span>
                    </DecimalBox>
                </ToolButton>
            </Row>
        </Rows>
    </Group>
);

const LargeTool = ({ icon, lines, width, kana }) => (
    <BigButton $w={width}>
        {icon}
        <BigLine $kana={kana}>{lines[0]}</BigLine>
        <BigLine $kana={kana}>
            {lines[1]}
            <Arrow />
        </BigLine>
    </BigButton>
);

const EditGroup = () => (
    <Group label="編集" width={208} pad={7}>
        <SmallStack $w={99}>
            <ToolButton $w={99} $left $gap={4}>
                <SumIcon />
                オート SUM
                <Svg w={9} h={3}>
                    <path d="M4 0h5L6.500 3z" fill="#666" />
                </Svg>
            </ToolButton>
            <ToolButton $w={99} $left $gap={4} $kana>
                <FillDownIcon />
                フィル
                <Arrow />
            </ToolButton>
            <ToolButton $w={99} $left $gap={4} $kana>
                <EraserIcon />
                クリア
                <Arrow />
            </ToolButton>
        </SmallStack>
        <BigButton $w={50}>
            <SortBox>
                <LetterStack>
                    <SortLetters $color="#4a80b8">A</SortLetters>
                    <SortLetters $color="#9a5fb8">Z</SortLetters>
                </LetterStack>
                <FunnelIcon />
            </SortBox>
            <BigLine $kana>並べ替えと</BigLine>
            <BigLine $kana>
                フィルター
                <Arrow />
            </BigLine>
        </BigButton>
        <LargeTool icon={<SearchIcon />} lines={['検索と', '選択']} width={50} kana />
    </Group>
);

const SheetTable = () => (
    <Sheet>
        <colgroup>
            <col width={29} />
            {COLUMNS.map(column => (
                <col key={column.id} width={column.width} />
            ))}
        </colgroup>
        <thead>
            <tr>
                <Corner aria-label="すべて選択">
                    <Svg w={17} h={17}>
                        <path d="M17 0v17H0z" fill="#b4b4b4" />
                    </Svg>
                </Corner>
                {COLUMNS.map(column => (
                    <ColumnHead key={column.id} $active={column.id === 'E'}>
                        {column.id}
                    </ColumnHead>
                ))}
            </tr>
        </thead>
        <tbody>
            <tr>
                <RowHead>1</RowHead>
                {COLUMNS.map(column => (
                    <FieldCell key={column.id} $data>
                        {column.title}
                    </FieldCell>
                ))}
            </tr>
            {MEMBERS.map((member, row) => (
                <tr key={member[0]}>
                    <RowHead $active={row === 3}>{row + 2}</RowHead>
                    {COLUMNS.map((column, index) => (
                        <Cell key={column.id} $data $right={column.right}>
                            {column.id === 'E' ? (
                                <Mail href={`mailto:${member[index]}`}>{member[index]}</Mail>
                            ) : (
                                member[index]
                            )}
                            {column.id === 'E' && row === 3 && (
                                <>
                                    <Frame />
                                    <Marker>1</Marker>
                                </>
                            )}
                        </Cell>
                    ))}
                </tr>
            ))}
            {EMPTY_ROWS.map(row => (
                <tr key={row}>
                    <RowHead>{row}</RowHead>
                    {COLUMNS.map(column => (
                        <Cell key={column.id} />
                    ))}
                </tr>
            ))}
        </tbody>
    </Sheet>
);

const App = () => (
    <Window>
        <GlobalStyle />
        <Header />

        <Ribbon>
            <ClipboardGroup />
            <FontGroup />
            <AlignGroup />
            <NumberGroup />
            <Group label="スタイル" width={178} kana>
                <LargeTool icon={<ConditionalIcon />} lines={['条件付き', '書式']} width={57} />
                <LargeTool icon={<FormatTableIcon />} lines={['テーブルとして', '書式設定']} width={64} kana />
                <LargeTool icon={<CellStyleIcon />} lines={['セルの', 'スタイル']} width={55} kana />
            </Group>
            <Group label="セル" width={135} pad={4} kana>
                <LargeTool icon={<InsertIcon />} lines={['挿入', '']} width={42} />
                <LargeTool icon={<DeleteIcon />} lines={['削除', '']} width={42} />
                <LargeTool icon={<FormatIcon />} lines={['書式', '']} width={42} />
            </Group>
            <EditGroup />
            <CollapseButton aria-label="リボンを折りたたむ">
                <ChevronUp />
            </CollapseButton>
        </Ribbon>

        <FormulaBar>
            <NameBox>
                <input aria-label="名前ボックス" defaultValue="E5" />
                <Triangle dir="down" />
            </NameBox>
            <Grip />
            <FormulaButtons>
                <button aria-label="キャンセル">
                    <CrossIcon />
                </button>
                <button aria-label="入力">
                    <CheckIcon />
                </button>
                <button aria-label="関数の挿入">
                    <FxLabel>
                        f<small>x</small>
                    </FxLabel>
                </button>
            </FormulaButtons>
            <FormulaInput>
                <input aria-label="数式バー" defaultValue="kagawa@xxxx.jp" />
                <ChevronDown />
            </FormulaInput>
        </FormulaBar>

        <GridArea>
            <GridView>
                <SheetTable />
            </GridView>
            <VScroll>
                <ScrollButton aria-label="上へ">
                    <Triangle dir="up" />
                </ScrollButton>
                <VThumb />
                <ScrollButton aria-label="下へ">
                    <Triangle dir="down" />
                </ScrollButton>
            </VScroll>
        </GridArea>

        <SheetBar>
            <SheetArrows>
                <Triangle dir="left" color="#bbb" />
                <Triangle dir="right" color="#bbb" />
            </SheetArrows>
            <SheetTab>会員名簿</SheetTab>
            <AddSheet aria-label="新しいシート">
                <AddIcon />
            </AddSheet>
            <BarGrip />
            <HScroll>
                <ScrollButton aria-label="左へ">
                    <Triangle dir="left" />
                </ScrollButton>
                <HThumb />
                <ScrollButton aria-label="右へ">
                    <Triangle dir="right" />
                </ScrollButton>
            </HScroll>
        </SheetBar>

        <StatusBar>
            <StatusText>準備完了</StatusText>
            <MacroIcon />
            <Views>
                <ViewButton $active aria-label="標準">
                    <NormalViewIcon />
                </ViewButton>
                <ViewButton aria-label="ページ レイアウト">
                    <PageViewIcon />
                </ViewButton>
                <ViewButton aria-label="改ページ プレビュー">
                    <BreakViewIcon />
                </ViewButton>
            </Views>
            <button aria-label="縮小">
                <StepIcon />
            </button>
            <ZoomRange type="range" min="10" max="190" defaultValue="100" aria-label="ズーム" />
            <button aria-label="拡大">
                <StepIcon plus />
            </button>
            <ZoomValue>100%</ZoomValue>
        </StatusBar>
    </Window>
);

export default App;
